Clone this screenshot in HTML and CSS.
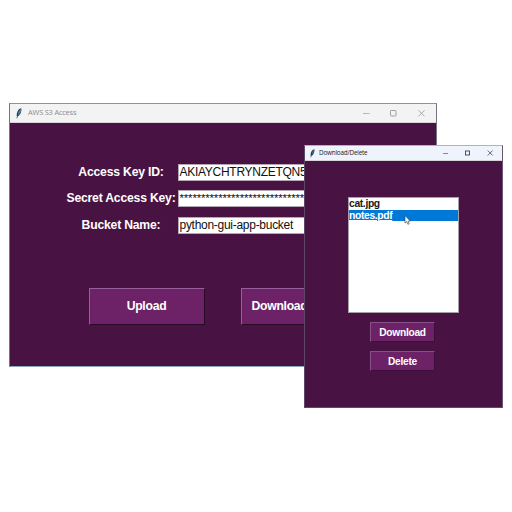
FILE: index.html
```
<!DOCTYPE html>
<html lang="en">
<head>
<meta charset="utf-8">
<title>AWS S3 Access</title>
<link rel="stylesheet" href="styles.css">
</head>
<body>
<main class="desktop">
  <section class="window main-window">
    <header class="titlebar">
      <svg class="feather" viewBox="0 0 8 11"><path d="M6.300.3C3.500.8 1.500 4 1.700 8L3 8.200C5.500 7 6.700 3.500 6.300.3Z" fill="#343a48"/><path d="M5.900 1C4 2.500 2.800 4.500 2.800 7.500 5.200 6 6.300 3.500 5.900 1Z" fill="#4685c4"/><path d="M3.200 5 1.900 10.300" stroke="#333" stroke-width=".7"/></svg>
      <span class="title">AWS S3 Access</span>
      <svg class="controls" viewBox="0 0 76 19" fill="none" stroke="#a0a0a0"><path d="M3 9.500h6.500" stroke="#b5b5b5"/><rect x="30.500" y="6.500" width="5.500" height="5.500" rx=".6"/><path d="m58.500 6.300 6 6m0-6-6 6" stroke-width=".9"/></svg>
    </header>
    <div class="form">
      <span class="label">Access Key ID:</span><span class="field">AKIAYCHTRYNZETQN5</span>
      <span class="label">Secret Access Key:</span><span class="field secret">*****************************</span>
      <span class="label">Bucket Name:</span><span class="field">python-gui-app-bucket</span>
    </div>
    <div class="actions">
      <button>Upload</button>
      <button>Download/Delete</button>
    </div>
  </section>

  <section class="window dialog">
    <header class="titlebar">
      <svg class="feather" viewBox="0 0 8 11"><path d="M6.300.3C3.500.8 1.500 4 1.700 8L3 8.200C5.500 7 6.700 3.500 6.300.3Z" fill="#252d3c"/><path d="M5.900 1C4 2.500 2.800 4.500 2.800 7.500 5.200 6 6.300 3.500 5.900 1Z" fill="#386f9f"/><path d="M3.200 5 1.900 10.300" stroke="#333" stroke-width=".7"/></svg>
      <span class="title">Download/Delete</span>
      <svg class="controls" viewBox="0 0 60 15" fill="none" stroke="#444"><path d="M1 7.500h5" stroke="#888"/><rect x="23.500" y="5" width="4" height="4" stroke-width=".9"/><path d="m45.700 4.500 5 5m0-5-5 5" stroke-width=".8"/></svg>
    </header>
    <div class="files">
      <div class="file">cat.jpg</div>
      <div class="file selected"><span>notes.pdf</span></div>
      <svg class="cursor" viewBox="0 0 7 10"><path d="M1 .6v7.500l1.700-1.500 1.200 2.700 1.300-.6-1.200-2.500 2.300-.1Z" fill="#fff" stroke="#333" stroke-width=".6"/></svg>
    </div>
    <div class="dialog-actions">
      <button>Download</button>
      <button>Delete</button>
    </div>
  </section>
</main>
</body>
</html>
```
FILE: styles.css
```
* { box-sizing: border-box; }

body {
  margin: 0;
  background: #fff;
  font-family: "Liberation Sans", Arial, sans-serif;
}

.desktop {
  position: relative;
  width: 512px;
  height: 512px;
  overflow: hidden;
}

.window {
  position: absolute;
  overflow: hidden;
  background: #481343;
}

.main-window {
  left: 9px;
  top: 103px;
  width: 428px;
  height: 264px;
  border: 1px solid #777486;
  border-top-color: #8f90a0;
  border-bottom-color: #8ba5bc;
}

.dialog {
  left: 304px;
  top: 145px;
  width: 199px;
  height: 263px;
  border: 1px solid #5b4967;
  border-top-color: #aeb3c2;
  border-right-color: #6c5570;
}

.titlebar {
  display: flex;
  align-items: center;
  height: 19px;
  padding-left: 5px;
  background: #f3f3f3;
  border-bottom: 1px solid #d8d2d9;
}

.title {
  margin-left: 5px;
  font: 7.400px/1 "Open Sans", sans-serif;
  letter-spacing: -.18px;
  color: #8c8c8c;
  white-space: nowrap;
}

.feather { width: 8px; height: 11px; }

.controls { width: 76px; height: 19px; margin-left: auto; }

.form {
  display: grid;
  grid-template-columns: 112px 178px;
  grid-template-rows: repeat(3, 17px);
  row-gap: 9.300px;
  column-gap: 1px;
  margin: 41px 0 0 55px;
}

.label {
  color: #fff;
  font-size: 12.200px;
  letter-spacing: -.2px;
  font-weight: bold;
  line-height: 17px;
  text-align: center;
  white-space: nowrap;
}

.field {
  height: 17px;
  padding-left: .5px;
  overflow: hidden;
  border: 1px solid #b5a6b5;
  background: #fff;
  color: #111;
  font-size: 12px;
  letter-spacing: -.28px;
  line-height: 15px;
  white-space: nowrap;
}

.secret {
  font-size: 11.500px;
  letter-spacing: -.18px;
}

.actions {
  display: flex;
  gap: 36px;
  margin: 54px 0 0 79px;
}

button {
  flex: none;
  padding: 0;
  border: 1px solid;
  border-color: #97609a #270a26 #270a26 #97609a;
  background: #6d2267;
  color: #fff;
  font-family: inherit;
  font-weight: bold;
  text-align: center;
  white-space: nowrap;
}

.actions button {
  width: 116px;
  height: 37px;
  padding-right: 1px;
  font-size: 12.200px;
  letter-spacing: -.28px;
}

.dialog .titlebar {
  height: 15px;
  padding-left: 4px;
  background: #eff3fb;
}

.dialog .title {
  margin-left: 3px;
  font-size: 6.300px;
  color: #222;
}

.dialog .feather { width: 7px; height: 9px; }

.dialog .controls { width: 60px; height: 15px; }

.files {
  position: relative;
  width: 111px;
  height: 116px;
  margin: 36px 0 0 43px;
  border: 1px solid #a7a0a9;
  background: #fff;
  font-size: 10.300px;
  letter-spacing: -.34px;
  font-weight: bold;
  color: #181818;
}

.file {
  height: 11.500px;
  line-height: 11.500px;
}

.selected {
  background: #0078d7;
  color: #fff;
}

.selected span {
  text-decoration: underline;
  text-decoration-thickness: 1px;
  text-underline-offset: 1px;
}

.cursor {
  position: absolute;
  left: 55px;
  top: 17px;
  width: 7px;
  height: 10px;
}

.dialog-actions {
  display: flex;
  flex-direction: column;
  gap: 9px;
  width: 65px;
  margin: 9px 0 0 65px;
}

.dialog-actions button {
  height: 20px;
  border-color: #855188 #3a1037 #3a1037 #855188;
  font-size: 10.200px;
  letter-spacing: -.26px;
}
```
